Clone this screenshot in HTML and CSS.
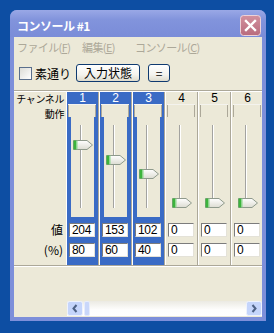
FILE: index.html
```html
<!DOCTYPE html>
<html>
<head>
    <title>コンソール #1</title>
    <link rel="stylesheet" href="styles.css">
</head>
<body>
    <div class="window">
        <div class="titlebar">
            <span class="title">コンソール #1</span>
            <svg class="close" width="21" height="21" viewBox="0 0 21 21">
                <defs>
                    <linearGradient id="closeFill" x1="0" y1="0" x2="0" y2="1">
                        <stop offset="0" stop-color="#d3919e"/>
                        <stop offset="1" stop-color="#b86b7d"/>
                    </linearGradient>
                </defs>
                <rect x="0.5" y="0.5" width="20" height="20" rx="3" fill="url(#closeFill)" stroke="#ecd2d8"/>
                <path d="M6 6 L15 15 M15 6 L6 15" stroke="#fff" stroke-width="2.4" stroke-linecap="square"/>
            </svg>
        </div>

        <div class="client">
            <div class="menubar">
                <span class="menu-item file">ファイル(<u>F</u>)</span>
                <span class="menu-item edit">編集(<u>E</u>)</span>
                <span class="menu-item">コンソール(<u>C</u>)</span>
            </div>

            <div class="toolbar">
                <span class="checkbox"></span>
                <span class="check-label">素通り</span>
                <button class="xp-button wide">入力状態</button>
                <button class="xp-button small">=</button>
            </div>

            <div class="mixer">
                <div class="labels">
                    <div class="label-head">
                        <div>チャンネル</div>
                        <div>動作</div>
                    </div>
                    <div class="label-row">値</div>
                    <div class="label-row">(%)</div>
                </div>
                <div class="channels" id="channels"></div>
            </div>

            <div class="hscroll">
                <svg class="scroll-btn" width="16" height="15" viewBox="0 0 16 15">
                    <rect x="0.5" y="0.5" width="15" height="14" rx="2" fill="#c5d5fb" stroke="#eef2fd"/>
                    <path d="M9.5 4 L6.5 7.5 L9.5 11" fill="none" stroke="#4d6185" stroke-width="2"/>
                </svg>
                <span class="scroll-thumb"></span>
                <span class="scroll-track"></span>
                <svg class="scroll-btn" width="16" height="15" viewBox="0 0 16 15">
                    <rect x="0.5" y="0.5" width="15" height="14" rx="2" fill="#c5d5fb" stroke="#eef2fd"/>
                    <path d="M6.5 4 L9.5 7.5 L6.5 11" fill="none" stroke="#4d6185" stroke-width="2"/>
                </svg>
            </div>
        </div>
    </div>

    <script>
        const channels = [
            { num: 1, value: 204, percent: 80, on: true },
            { num: 2, value: 153, percent: 60, on: true },
            { num: 3, value: 102, percent: 40, on: true },
            { num: 4, value: 0, percent: 0, on: false },
            { num: 5, value: 0, percent: 0, on: false },
            { num: 6, value: 0, percent: 0, on: false }
        ];

        const thumb = `<svg class="thumb" width="20" height="10" viewBox="0 0 20 10" style="top: TOPpx">
            <defs>
                <linearGradient id="thumbFill" x1="0" y1="0" x2="0" y2="1">
                    <stop offset="0" stop-color="#ffffff"/>
                    <stop offset="1" stop-color="#dcdcd2"/>
                </linearGradient>
            </defs>
            <path d="M0.5 0.5 H14 L19.5 5 L14 9.5 H0.5 Z" fill="url(#thumbFill)" stroke="#8f9a8c"/>
            <rect x="0.5" y="0.5" width="3" height="9" fill="#3cb43c"/>
            <rect x="3.5" y="0.5" width="1" height="9" fill="#8ad88a"/>
        </svg>`;

        let html = '';
        channels.forEach(ch => {
            // thumb travels 72px over the 0..255 range
            const top = Math.round(81 - ch.value / 255 * 72);
            html += `<div class="ch${ch.on ? ' on' : ''}">
                <div class="ch-num">${ch.num}</div>
                <div class="ch-mode"></div>
                <div class="ch-slider">
                    <span class="track"></span>
                    ${thumb.replace('TOP', top)}
                </div>
                <div class="ch-val">${ch.value}</div>
                <div class="ch-val">${ch.percent}</div>
            </div>`;
        });
        document.getElementById('channels').innerHTML = html;
    </script>
</body>
</html>
```

FILE: styles.css
```css
body {
    margin: 0;
    width: 274px;
    height: 333px;
    overflow: hidden;
    background-color: #0d4ea3;
    font-family: "Noto Sans CJK JP", "Liberation Sans", sans-serif;
    font-size: 12px;
}

.window {
    width: 256px;
    margin: 10px 0 0 10px;
    padding-bottom: 4px;
    background-color: #7d8fda;
    border-radius: 7px 7px 0 0;
}

.titlebar {
    height: 27px;
    box-sizing: border-box;
    padding: 3px 5px 0 7px;
    display: flex;
    align-items: center;
    justify-content: space-between;
    background: linear-gradient(#9aa8e6, #8294dc 35%, #7a8cd8);
    border-radius: 7px 7px 0 0;
}

.title {
    color: #fff;
    font-weight: bold;
    font-size: 12px;
    letter-spacing: -0.5px;
}

.client {
    margin: 0 4px;
    height: 280px;
    background-color: #ece9d8;
}

.menubar {
    height: 19px;
    padding-left: 3px;
    display: flex;
    align-items: center;
    color: #aca899;
    font-size: 11px;
    letter-spacing: -0.6px;
}

.menu-item.file {
    width: 65px;
}

.menu-item.edit {
    width: 53px;
}

.toolbar {
    height: 34px;
    padding-left: 5px;
    display: flex;
    align-items: center;
    border-bottom: 1px solid #aca899;
    box-shadow: 0 1px #fff;
}

.checkbox {
    width: 11px;
    height: 11px;
    border: 1px solid #5a6f8c;
    background: linear-gradient(135deg, #dcdcd6, #fff);
}

.check-label {
    margin-left: 3px;
    width: 41px;
    font-size: 12px;
}

.xp-button {
    height: 18px;
    padding: 0;
    margin-right: 8px;
    border: 1px solid #0f3a70;
    border-radius: 3px;
    background: linear-gradient(#fff, #f4f3ee 60%, #dedbcc);
    font-family: "Noto Sans CJK JP", "Liberation Sans", sans-serif;
    font-size: 12px;
    line-height: 14px;
    color: #000;
}

.xp-button.wide {
    width: 64px;
}

.xp-button.small {
    width: 22px;
}

.mixer {
    margin-top: 1px;
    display: flex;
    border-bottom: 1px solid #aca899;
    box-shadow: 0 1px #fff;
}

.labels {
    width: 52px;
    flex: none;
    text-align: right;
}

.label-head {
    height: 131px;
    padding-right: 2px;
    font-size: 10px;
    line-height: 14.5px;
    letter-spacing: -0.4px;
}

.label-row {
    height: 14px;
    margin-bottom: 6px;
    padding-right: 3px;
    line-height: 14px;
}

.channels {
    width: 196px;
    display: flex;
    overflow: hidden;
}

.ch {
    flex: none;
    width: 31px;
    padding-bottom: 8px;
    border-left: 1px solid #fff;
    border-right: 1px solid #aca899;
}

.ch.on {
    background-color: #3a6bc5;
}

.ch-num {
    height: 12px;
    text-align: center;
    font-family: "Liberation Sans", sans-serif;
    font-size: 12px;
    line-height: 13px;
}

.ch.on .ch-num {
    color: #fff;
}

.ch-mode {
    height: 12px;
    margin: 0 2px 0 1px;
    background-color: #ece9d8;
    border-top: 1px solid #f4f3ee;
    box-shadow: inset 1px 0 #aca899, inset -1px 0 #aca899;
}

.ch-slider {
    position: relative;
    height: 100px;
    margin: 0 4px;
    background-color: #ece9d8;
}

.track {
    position: absolute;
    left: 9px;
    top: 8px;
    width: 1px;
    height: 83px;
    background-color: #a3a3a0;
    border-right: 1px solid #fff;
}

.thumb {
    position: absolute;
    left: 2px;
}

.ch-val {
    height: 12px;
    margin: 6px 3px 0 2px;
    padding-left: 2px;
    background-color: #fff;
    border: 1px solid;
    border-color: #7c7c7c #e4e2d8 #e4e2d8 #7c7c7c;
    font-family: "Liberation Sans", sans-serif;
    font-size: 12px;
    line-height: 13px;
    letter-spacing: -0.3px;
}

.hscroll {
    width: 195px;
    height: 15px;
    margin: 35px 0 0 53px;
    display: flex;
    background: linear-gradient(#ebeae3, #fefefd 60%, #fff);
}

.scroll-btn {
    flex: none;
}

.scroll-thumb {
    flex: none;
    width: 6px;
    margin-left: 1px;
    background-color: #c9d7fa;
    border: 1px solid #e6ecfc;
    border-radius: 2px;
    box-sizing: border-box;
}

.scroll-track {
    flex: 1;
}
```
